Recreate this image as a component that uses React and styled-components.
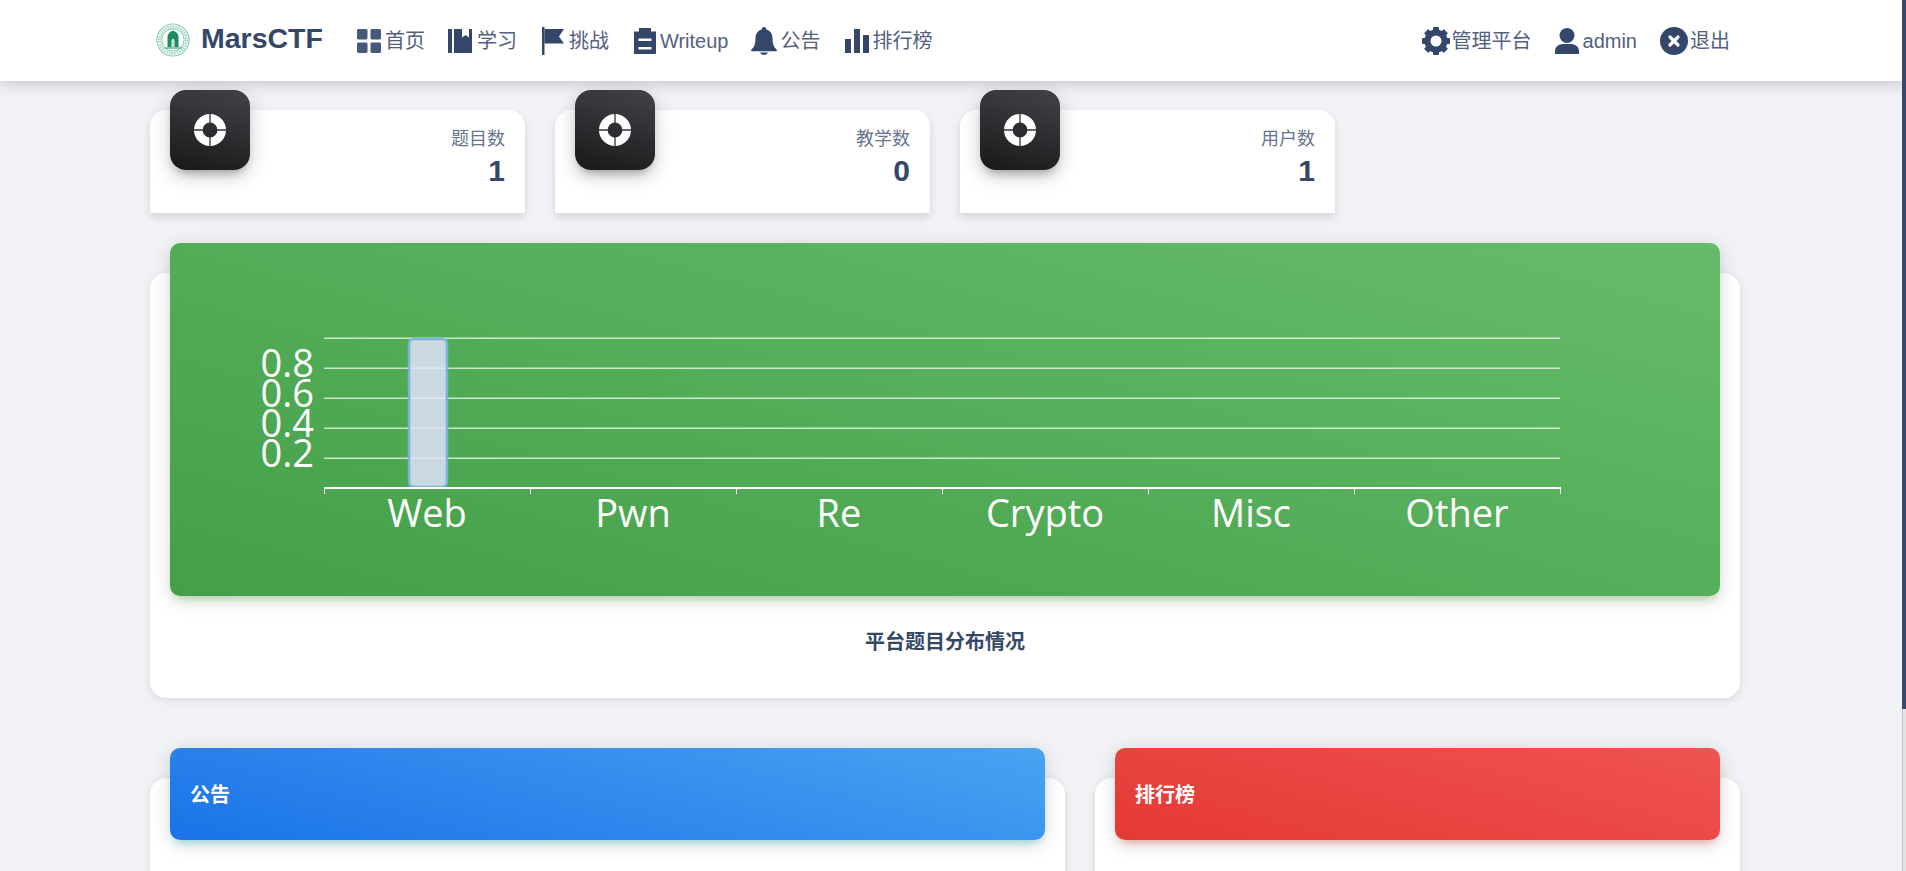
import React from "react";
import styled, { createGlobalStyle } from "styled-components";

const Global = createGlobalStyle`
  html { background: #f0f2f5; scrollbar-width: none; }
  body {
    margin: 0;
    background: #f0f2f5;
    font-family: "Liberation Sans", "Noto Sans CJK SC", sans-serif;
    color: #344767;
  }
`;

const ScrollTrack = styled.div`
  position: fixed;
  top: 0;
  right: 0;
  bottom: 0;
  width: 4px;
  background: #e3e3e3;
  box-shadow: inset 1px 0 0 #c4c4c8;
  z-index: 10;
`;
const ScrollThumb = styled.div`
  height: ${(p) => p.$height}px;
  background: #3c486a;
`;

const Navbar = styled.header`
  height: 81px;
  background: #fff;
  box-shadow: 0 2px 14px rgba(0, 0, 0, 0.2);
  position: relative;
  z-index: 5;
`;
const NavInner = styled.nav`
  width: 1574px;
  height: 100%;
  margin-left: 156px;
  display: flex;
  align-items: center;
  justify-content: space-between;
`;
const NavGroup = styled.div`
  display: flex;
  align-items: center;
  gap: ${(p) => p.$gap}px;
`;
const Brand = styled.a`
  display: flex;
  align-items: center;
  gap: 11px;
  margin-right: 11px;
  font-size: 28.5px;
  font-weight: 700;
  color: #344767;
  position: relative;
  top: -1px;
`;
const BrandName = styled.span`
  padding-bottom: 2px;
`;
const NavItem = styled.a`
  display: flex;
  align-items: center;
  gap: ${(p) => p.$gap ?? 5}px;
  font-size: 20px;
  line-height: 28px;
  color: #53617f;
  white-space: nowrap;
`;
const Glyph = styled.svg`
  display: block;
  flex: none;
  fill: ${(p) => p.$tone || "#34466a"};
`;
const ShiftedGlyph = styled(Glyph)`
  margin-left: 2px;
`;

const Main = styled.main`
  width: 1590px;
  margin-left: 150px;
  padding: 29px 0 30px;
  box-sizing: border-box;
  height: 989px;
`;
const StatGrid = styled.section`
  display: grid;
  grid-template-columns: repeat(3, 375px);
  gap: 30px;
`;
const StatCard = styled.article`
  position: relative;
  height: 103px;
  box-sizing: border-box;
  padding: 17px 20px 0 0;
  background: #fff;
  border-radius: 16px 16px 0 0;
  box-shadow: 0 4px 8px rgba(0, 0, 0, 0.13);
  text-align: right;
`;
const StatIcon = styled.div`
  position: absolute;
  left: 20px;
  top: -20px;
  width: 80px;
  height: 80px;
  border-radius: 16px;
  display: flex;
  align-items: center;
  justify-content: center;
  background: linear-gradient(195deg, #42424a, #191919);
  box-shadow: 0 6px 20px rgba(0, 0, 0, 0.2), 0 7px 10px -5px rgba(64, 64, 64, 0.4);
`;
const StatLabel = styled.div`
  font-size: 18px;
  line-height: 24px;
  color: #67748e;
`;
const StatValue = styled.div`
  font-size: 30px;
  line-height: 36px;
  margin-top: 2px;
  font-weight: 700;
  color: #344767;
`;

const Card = styled.section`
  background: #fff;
  border-radius: 16px;
  box-shadow: 0 2px 8px rgba(0, 0, 0, 0.1);
  padding: 0 20px;
`;
const ChartCard = styled(Card)`
  margin-top: 60px;
  height: 425px;
`;
const ChartHeader = styled.div`
  position: relative;
  top: -30px;
  height: 353px;
  border-radius: 10px;
  background: linear-gradient(195deg, #66bb6a, #43a047);
  box-shadow: 0 4px 20px rgba(0, 0, 0, 0.14), 0 7px 10px -5px rgba(76, 175, 80, 0.4);
`;
const ChartSvg = styled.svg`
  display: block;
  width: 100%;
  height: 100%;
`;
const ChartTitle = styled.h3`
  margin: 0;
  padding-top: 1px;
  text-align: center;
  font-size: 20px;
  line-height: 30px;
  font-weight: 700;
  color: #344767;
`;
const LowerGrid = styled.div`
  display: grid;
  grid-template-columns: 915px 645px;
  gap: 30px;
  margin-top: 80px;
`;
const LowerCard = styled(Card)`
  height: 240px;
`;
const BannerHeader = styled.div`
  position: relative;
  top: -30px;
  height: 92px;
  box-sizing: border-box;
  padding: 0 0 2px 20px;
  display: flex;
  align-items: center;
  border-radius: 10px;
  font-size: 20px;
  font-weight: 700;
  color: #fff;
  background: ${(p) => p.$bg};
  box-shadow: 0 4px 20px rgba(0, 0, 0, 0.14), 0 7px 10px -5px ${(p) => p.$glow};
`;

const LogoMark = styled.svg`
  display: block;
  flex: none;
  fill: none;
`;

const Logo = () => (
  <LogoMark width="34" height="34" viewBox="0 0 34 34">
    <circle cx="17" cy="17" r="16" stroke="#8fcdb4" strokeWidth="1.2" />
    <circle cx="17" cy="17" r="13.4" stroke="#a8dac6" strokeWidth="3" strokeDasharray="1.6 1" />
    <circle cx="17" cy="17" r="11.2" stroke="#5fb596" strokeWidth="0.8" />
    <path d="M11.500 24V14C11.500 10.500 14.500 8.500 17 7.500c2.500 1 5.500 3 5.500 6.500V24Z" fill="#1d8a60" />
    <path d="M15.400 24v-6c0-1.200.7-2.200 1.600-2.200s1.600 1 1.600 2.200v6Z" fill="#bfe6d4" />
    <path d="M8.500 25h17" stroke="#4fae8b" strokeWidth="1.4" />
  </LogoMark>
);

const GridIcon = () => (
  <Glyph $tone="#47597a" width="24" height="24" viewBox="0 0 24 24">
    <rect x="0" y="0" width="10.500" height="10.500" rx="1.400" />
    <rect x="13.500" y="0" width="10.500" height="10.500" rx="1.400" />
    <rect x="0" y="13.500" width="10.500" height="10.500" rx="1.400" />
    <rect x="13.500" y="13.500" width="10.500" height="10.500" rx="1.400" />
  </Glyph>
);
const BookIcon = () => (
  <Glyph width="24" height="24" viewBox="0 0 24 24">
    <path d="M0 0h4v24H0Z" />
    <path d="M6 0h8v8.500L17.500 6 21 8.500V0h3v24H6Z" />
  </Glyph>
);
const FlagIcon = () => (
  <ShiftedGlyph width="22" height="28" viewBox="0 0 22 28">
    <path d="M0 0h2.500v28H0Z" />
    <path d="M2.500 2H22l-5 7.500L22 16.500H2.500Z" />
  </ShiftedGlyph>
);
const ClipboardIcon = () => (
  <ShiftedGlyph width="22" height="26" viewBox="0 0 22 26">
    <path d="M0 3.500h5V0h12v3.500h5V26H0ZM4.500 10.500V13h13v-2.500Zm0 8.500v2.500h13V19Z" fillRule="evenodd" />
  </ShiftedGlyph>
);
const BellIcon = () => (
  <Glyph width="26" height="28" viewBox="0 0 26 28">
    <path d="M13 0c1.500 0 2.200 1 2.300 2.500C19.500 3.700 21.500 7 21.500 11.500c0 5 1 8 3.500 10.500.7.700 1 1.100 1 1.500 0 .5-.4.800-1 .8H1c-.6 0-1-.3-1-.8 0-.4.300-.8 1-1.500C3.500 19.500 4.500 16.500 4.500 11.500 4.500 7 6.500 3.700 10.700 2.500 10.800 1 11.500 0 13 0Z" />
    <path d="M9 25.500h8c-.5 1.600-2.200 2.500-4 2.500s-3.500-.9-4-2.500Z" />
  </Glyph>
);
const BarsIcon = () => (
  <ShiftedGlyph width="24" height="24" viewBox="0 0 24 24">
    <rect x="0" y="10" width="6" height="14" />
    <rect x="9" y="0" width="6" height="24" />
    <rect x="18" y="6" width="6" height="18" />
  </ShiftedGlyph>
);
const GearIcon = () => (
  <Glyph width="28" height="28" viewBox="0 0 28 28">
    {[0, 45, 90, 135, 180, 225, 270, 315].map((a) => (
      <rect key={a} x="11" y="0" width="6" height="6" rx="1" transform={`rotate(${a} 14 14)`} />
    ))}
    <circle cx="14" cy="14" r="8.500" fill="none" stroke="#34466a" strokeWidth="6" />
  </Glyph>
);
const UserIcon = () => (
  <Glyph width="24" height="26" viewBox="0 0 24 26">
    <circle cx="12" cy="7.500" r="7.500" />
    <path d="M0 26v-3c0-4 3.500-7 8-7h8c4.500 0 8 3 8 7v3Z" />
  </Glyph>
);
const CloseIcon = () => (
  <Glyph width="28" height="28" viewBox="0 0 28 28">
    <circle cx="14" cy="14" r="14" />
    <path d="M10 10l8 8M18 10l-8 8" stroke="#fff" strokeWidth="3.200" strokeLinecap="round" fill="none" />
  </Glyph>
);
const BuoyMark = styled.svg`
  display: block;
`;
const BuoyIcon = () => (
  <BuoyMark width="34" height="34" viewBox="0 0 34 34">
    <circle cx="17" cy="17" r="11.700" fill="none" stroke="#fff" strokeWidth="8.600" />
    <path d="M17 0v10M17 24v10M0 17h10M24 17h10" stroke="#33333a" strokeWidth="1.300" />
  </BuoyMark>
);

const grid = [95, 125, 155, 185, 215];
const yLabels = [
  ["0.8", 134],
  ["0.6", 164],
  ["0.4", 194],
  ["0.2", 224],
];
const categories = ["Web", "Pwn", "Re", "Crypto", "Misc", "Other"];
const axisFont = { fontFamily: '"Open Sans", sans-serif', fontSize: 38, fill: "#fff" };

const Chart = () => (
  <ChartSvg viewBox="0 0 1550 353">
    {grid.map((y) => (
      <line key={y} x1="154" x2="1390" y1={y + 0.3} y2={y + 0.3} stroke="rgba(255,255,255,0.72)" strokeWidth="1.500" />
    ))}
    <rect x="239" y="96" width="38" height="148" rx="5" fill="rgba(230,227,255,0.82)" stroke="#78b4dc" strokeWidth="2.500" />
    <line x1="154" x2="1391" y1="245" y2="245" stroke="#fff" strokeWidth="2" />
    {[0, 1, 2, 3, 4, 5, 6].map((i) => (
      <line key={i} x1={154.5 + i * 206} x2={154.5 + i * 206} y1="245" y2="251" stroke="#fff" />
    ))}
    {yLabels.map(([t, y]) => (
      <text key={t} x="144" y={y} textAnchor="end" style={axisFont}>{t}</text>
    ))}
    {categories.map((c, i) => (
      <text key={c} x={257 + i * 206} y="284" textAnchor="middle" style={axisFont}>{c}</text>
    ))}
  </ChartSvg>
);

const stats = [
  ["题目数", 1],
  ["教学数", 0],
  ["用户数", 1],
];
const leftNav = [
  [GridIcon, "首页", 4],
  [BookIcon, "学习", 5],
  [FlagIcon, "挑战", 5],
  [ClipboardIcon, "Writeup", 4],
  [BellIcon, "公告", 3],
  [BarsIcon, "排行榜", 3],
];
const rightNav = [
  [GearIcon, "管理平台", 2],
  [UserIcon, "admin", 4],
  [CloseIcon, "退出", 2],
];

export default function App() {
  return (
    <>
      <Global />
      <ScrollTrack><ScrollThumb $height={709} /></ScrollTrack>
      <Navbar>
        <NavInner>
          <NavGroup $gap={23}>
            <Brand><Logo /><BrandName>MarsCTF</BrandName></Brand>
            {leftNav.map(([Icon, label, gap]) => (
              <NavItem key={label} $gap={gap}><Icon />{label}</NavItem>
            ))}
          </NavGroup>
          <NavGroup $gap={23}>
            {rightNav.map(([Icon, label, gap]) => (
              <NavItem key={label} $gap={gap}><Icon />{label}</NavItem>
            ))}
          </NavGroup>
        </NavInner>
      </Navbar>
      <Main>
        <StatGrid>
          {stats.map(([label, value]) => (
            <StatCard key={label}>
              <StatIcon><BuoyIcon /></StatIcon>
              <StatLabel>{label}</StatLabel>
              <StatValue>{value}</StatValue>
            </StatCard>
          ))}
        </StatGrid>
        <ChartCard>
          <ChartHeader><Chart /></ChartHeader>
          <ChartTitle>平台题目分布情况</ChartTitle>
        </ChartCard>
        <LowerGrid>
          <LowerCard>
            <BannerHeader $bg="linear-gradient(195deg, #49a3f1, #1a73e8)" $glow="rgba(0, 188, 212, 0.4)">
              公告
            </BannerHeader>
          </LowerCard>
          <LowerCard>
            <BannerHeader $bg="linear-gradient(195deg, #ef5350, #e53935)" $glow="rgba(244, 67, 54, 0.4)">
              排行榜
            </BannerHeader>
          </LowerCard>
        </LowerGrid>
      </Main>
    </>
  );
}
